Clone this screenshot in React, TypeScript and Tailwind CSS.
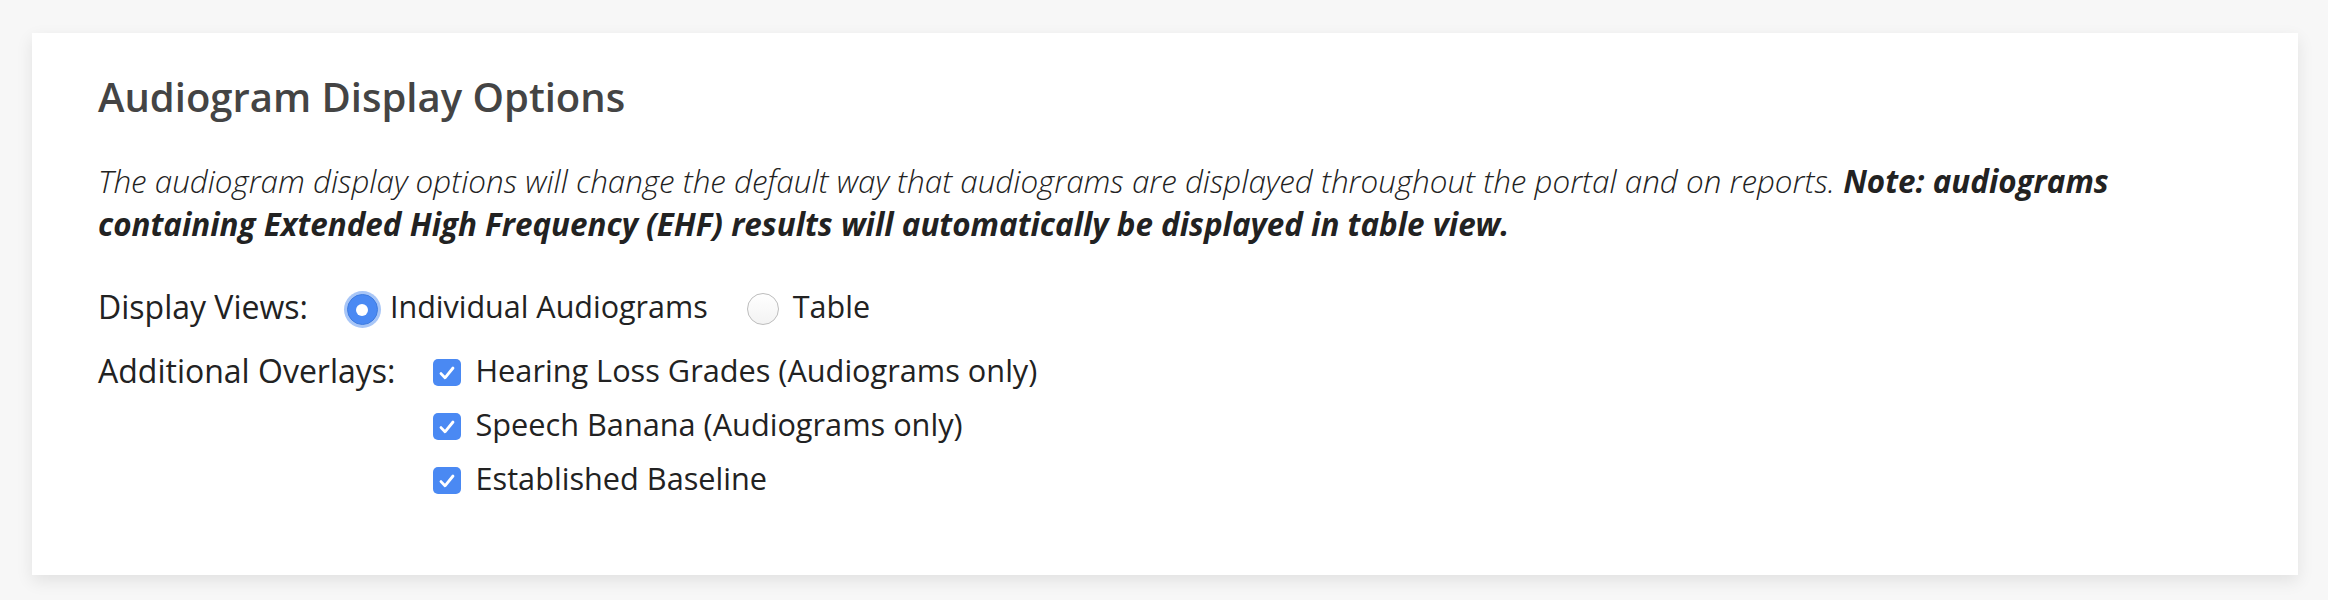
import React from 'react';

function Radio({ checked }: { checked?: boolean }) {
  if (checked) {
    return (
      <span className="mt-[7px] flex h-[37px] w-[37px] shrink-0 items-center justify-center rounded-full bg-[#a8c6f7]">
        <span className="flex h-[31px] w-[31px] items-center justify-center rounded-full border border-[#3f7ce0] bg-[#4a89f3]">
          <span className="h-[12px] w-[12px] rounded-full bg-white" />
        </span>
      </span>
    );
  }
  return (
    <span className="mt-[6px] h-[32px] w-[32px] shrink-0 rounded-full border border-[#bdbdbd] bg-gradient-to-b from-white to-[#f3f3f3]" />
  );
}

function Checkbox() {
  return (
    <span className="mt-[4px] flex h-[27px] w-[28px] shrink-0 items-center justify-center rounded-[5px] bg-[#4a89f3]">
      <svg width="18" height="16" viewBox="0 0 18 16" fill="none">
        <path d="M3 8.6 L7 12.8 L15 3" stroke="white" strokeWidth="2.8" strokeLinecap="round" strokeLinejoin="round" />
      </svg>
    </span>
  );
}

const overlays = [
  'Hearing Loss Grades (Audiograms only)',
  'Speech Banana (Audiograms only)',
  'Established Baseline'
];

export default function App() {
  return (
    <div className="min-h-[600px] bg-[#f7f7f7] pl-[32px] pr-[30px] pt-[33px] font-['Open_Sans',sans-serif]">
      <div className="bg-white px-[66px] pt-[42px] pb-[75px] shadow-[0_6px_16px_rgba(0,0,0,0.09)]">
        <h2 className="text-[40px] font-semibold leading-[44px] text-[#444]">
          Audiogram Display Options
        </h2>

        <p className="mt-[40px] text-[31.4px] font-light italic leading-[43px] text-[#222]">
          The audiogram display options will change the default way that audiograms are displayed throughout the
          portal and on reports.{' '}
          <strong className="font-bold">
            Note: audiograms containing Extended High Frequency (EHF) results will automatically be displayed in
            table view.
          </strong>
        </p>

        <div className="mt-[39px] flex items-center text-[32px] leading-[43px] text-[#222]">
          <span className="mr-[36px]">Display Views:</span>
          <Radio checked />
          <span className="ml-[9px] text-[30.5px]">Individual Audiograms</span>
          <span className="ml-[39px] flex items-center">
            <Radio />
            <span className="ml-[14px] text-[30.5px]">Table</span>
          </span>
        </div>

        <div className="mt-[21px] flex items-start text-[32px] leading-[43px] text-[#222]">
          <span className="mr-[38px]">Additional Overlays:</span>
          <div className="flex flex-col gap-[11px]">
            {overlays.map((label) => (
              <div key={label} className="flex items-center">
                <Checkbox />
                <span className="ml-[14px] text-[30.7px]">{label}</span>
              </div>
            ))}
          </div>
        </div>
      </div>
    </div>
  );
}
